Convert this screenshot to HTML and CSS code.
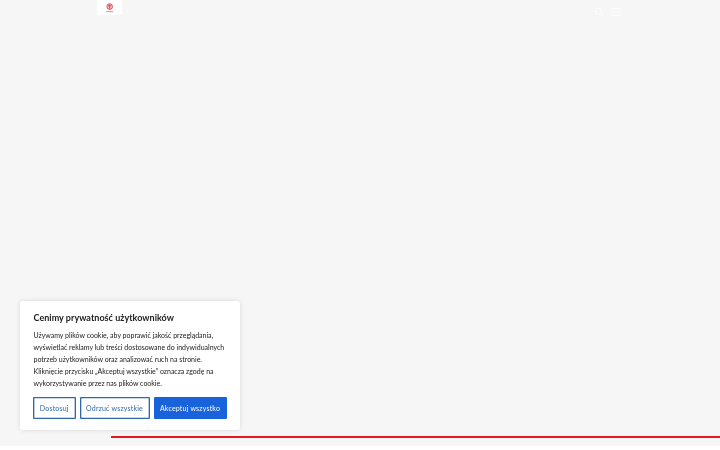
FILE: index.html
```
<!DOCTYPE html>
<html lang="pl">
<head>
    <meta charset="utf-8">
    <title>Strona główna</title>
    <link rel="stylesheet" href="styles.css">
</head>
<body>
    <div class="hero">
        <header class="header">
            <a class="logo" href="#">
                <svg width="8" height="10" viewBox="0 0 8 10">
                    <circle cx="3.7" cy="3.6" r="2.8" fill="#f6c5c9" stroke="#e0525a" stroke-width="1"/>
                    <path d="M2.1 2.8h3.2M3.7 1.3v4.6" stroke="#d9434c" stroke-width="0.9"/>
                    <path d="M0.3 8.6h6.8" stroke="#ee9a9e" stroke-width="1.2"/>
                </svg>
            </a>
            <nav class="tools">
                <svg width="10" height="10" viewBox="0 0 10 10" fill="none" stroke="#fff">
                    <circle cx="4.3" cy="4.3" r="3.2"/>
                    <path d="M6.6 6.6l2.4 2.4"/>
                </svg>
                <svg width="10" height="8" viewBox="0 0 10 8" stroke="#fff">
                    <path d="M0 1h10M0 4h10M0 7h10"/>
                </svg>
            </nav>
        </header>
        <div class="line"></div>
    </div>

    <div class="cookie-box">
        <h2>Cenimy prywatność użytkowników</h2>
        <p>Używamy plików cookie, aby poprawić jakość przeglądania, wyświetlać reklamy lub treści dostosowane do indywidualnych potrzeb użytkowników oraz analizować ruch na stronie. Kliknięcie przycisku „Akceptuj wszystkie” oznacza zgodę na wykorzystywanie przez nas plików cookie.</p>
        <div class="buttons">
            <button class="customize">Dostosuj</button>
            <button class="reject">Odrzuć wszystkie</button>
            <button class="accept">Akceptuj wszystko</button>
        </div>
    </div>
</body>
</html>
```

FILE: styles.css
```
body {
    font-family: Lato, sans-serif;
    background-color: #fff;
    margin: 0;
    height: 450px;
    overflow: hidden;
}
.hero {
    background-color: #f6f6f6;
    height: 446px;
    display: flex;
    flex-direction: column;
    justify-content: space-between;
}
.header {
    display: flex;
    justify-content: space-between;
    align-items: flex-start;
    padding: 0 99px 0 97px;
}
.logo {
    background-color: #fff;
    width: 25px;
    height: 15px;
    display: flex;
    justify-content: center;
    align-items: flex-end;
}
.logo svg {
    margin-bottom: 2px;
}
.tools {
    display: flex;
    align-items: center;
    gap: 7px;
    padding-top: 7px;
}
.line {
    background-color: #e2191e;
    height: 2px;
    margin: 0 0 8px 111px;
}
.cookie-box {
    position: fixed;
    left: 20px;
    bottom: 20px;
    width: 220px;
    height: 129px;
    box-sizing: border-box;
    padding: 11px 13px 0 13.5px;
    background-color: #fff;
    border-radius: 3px;
    box-shadow: 0 0 5px rgba(0, 0, 0, 0.12);
}
h2 {
    color: #212121;
    font-size: 9px;
    line-height: 12px;
    font-weight: 700;
    letter-spacing: 0.03px;
    margin: 0 0 5px;
}
p {
    color: #212121;
    font-size: 7px;
    line-height: 12px;
    letter-spacing: -0.01px;
    margin: 0 -2px 8.4px 0;
}
.buttons {
    display: flex;
    gap: 4px;
    margin-left: -0.5px;
}
button {
    height: 22px;
    padding: 0 0 1px;
    border: 0;
    border-radius: 1px;
    box-shadow: inset 0 0 0 1.35px #2f69a8;
    background-color: #fff;
    color: #2f69a8;
    font-family: inherit;
    font-size: 7px;
    letter-spacing: 0.2px;
    white-space: nowrap;
}
.customize {
    width: 42.5px;
}
.reject {
    width: 70px;
}
.accept {
    width: 73px;
    background-color: #1863dc;
    box-shadow: none;
    color: #fff;
}
```
